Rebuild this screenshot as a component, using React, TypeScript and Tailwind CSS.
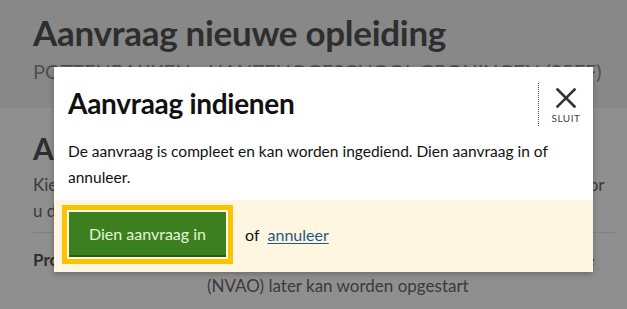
import React from "react";

const font = { fontFamily: "Lato, 'Open Sans', sans-serif" };

const CloseIcon = () => (
  <svg width="22" height="22" viewBox="0 0 22 22" fill="none" stroke="#333" strokeWidth="2.6" strokeLinecap="square">
    <path d="M2.5 2.5 L19.5 19.5 M19.5 2.5 L2.5 19.5" />
  </svg>
);

export default function App() {
  return (
    <div className="relative w-[627px] h-[309px] overflow-hidden bg-[#8f8f8f] font-[Lato,sans-serif]">
      {/* dimmed page behind the dialog */}
      <div className="bg-[#888888] h-[108px] px-[33px] pt-[10px]">
        <h1 className="text-[35px] font-bold leading-[44px] text-[#2e2e2e] tracking-[-0.3px]">Aanvraag nieuwe opleiding</h1>
        <p className="mt-[5px] text-[20px] leading-[24px] text-[#4e4e4e] uppercase whitespace-nowrap">
          Pottenbakken - Hanzehogeschool Groningen (35FF)
        </p>
      </div>
      <div className="px-[33px] pr-[12px]">
        <h2 className="mt-[22px] text-[30px] font-bold leading-[36px] text-[#2e2e2e]">Aanvraag indienen</h2>
        <p className="mt-[6px] text-[17px] leading-[26px] text-[#3a3a3a] whitespace-nowrap">
          Kies of u de aanvraag wilt indienen. Controleer eerst alle gegevens goed voor
          <br />
          u de aanvraag definitief verstuurt.
        </p>
        <div className="mt-[8px] border-t border-[#808080] flex py-[14px]">
          <div className="w-[174px] shrink-0 text-[17px] font-bold text-[#2e2e2e] leading-[26px]">Procedure</div>
          <div className="text-[17px] leading-[26px] text-[#3a3a3a] whitespace-nowrap">
            Na indienen wordt de aanvraag ingestuurd, zodat de
            <br />
            (NVAO) later kan worden opgestart
          </div>
        </div>
        <div className="border-t border-[#808080]" />
      </div>

      {/* dialog */}
      <div className="absolute left-[54px] top-[67px] w-[539px] bg-white shadow-[0_2px_6px_rgba(0,0,0,0.25)]" style={font}>
        <div className="flex justify-between items-start">
          <h3 className="pl-[14px] pt-[20px] text-[28px] font-bold leading-[32px] text-[#111] tracking-[-0.3px]">Aanvraag indienen</h3>
          <button className="mt-[16px] w-[55px] h-[43px] border-l border-dotted border-[#555] flex flex-col items-center pt-[4px]">
            <CloseIcon />
            <span className="mt-[3px] text-[10px] leading-[12px] tracking-[0.5px] text-[#444]">SLUIT</span>
          </button>
        </div>
        <p className="px-[14px] pt-[12px] pb-[10px] text-[15.5px] leading-[26px] text-[#111]">
          De aanvraag is compleet en kan worden ingediend. Dien aanvraag in of annuleer.
        </p>
        <div className="bg-[#fef6e1] pl-[8px] pt-[5px] pb-[8px] flex items-center">
          <div className="border-[5px] border-[#fcc400] p-[2px] bg-[#fff8e6]">
            <button className="w-[157px] h-[45px] bg-[#3c7f1e] border-b-[2px] border-[#2b5c15] text-[#e4f6d6] text-[16px]">
              Dien aanvraag in
            </button>
          </div>
          <span className="ml-[12px] text-[16px] text-[#111]">of</span>
          <a href="#" className="ml-[8px] text-[16px] text-[#1e5a86] underline underline-offset-2">annuleer</a>
        </div>
      </div>
    </div>
  );
}
